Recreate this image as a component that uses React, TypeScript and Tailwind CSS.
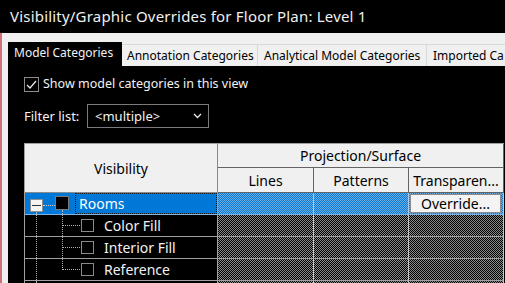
import React from "react";

const checker =
  "bg-[image:repeating-conic-gradient(#8a8a8a_0_25%,#000_0_50%)] bg-[length:2px_2px]";
const blueChecker =
  "bg-[image:repeating-conic-gradient(#6aaee8_0_25%,#0a78d4_0_50%)] bg-[length:2px_2px]";

function ChildRow({ label, last }: { label: string; last?: boolean }) {
  return (
    <>
      <div className="relative bg-black border-r border-b border-[#a0a0a0] flex items-center pl-[56px] gap-[10px]">
        <div className="absolute left-[11px] top-0 bottom-0 border-l border-dotted border-[#b0b0b0]" />
        <div
          className={
            "absolute left-[37px] top-0 border-l border-dotted border-[#b0b0b0] " +
            (last ? "h-[11px]" : "bottom-0")
          }
        />
        <div className="absolute left-[38px] top-[10px] w-[17px] border-t border-dotted border-[#b0b0b0]" />
        <div className="w-[13px] h-[13px] border border-[#8a8a8a] bg-black shrink-0" />
        <span className="text-[14px] text-[#f2f2f2] leading-none">{label}</span>
      </div>
      <div className={checker + " border-r border-b border-r-[#c8c8c8] border-b-[#a0a0a0]"} />
      <div className={checker + " border-r border-b border-r-[#c8c8c8] border-b-[#a0a0a0]"} />
      <div className={checker + " border-r border-b border-r-[#c8c8c8] border-b-[#a0a0a0]"} />
    </>
  );
}

export default function App() {
  return (
    <div className="w-[505px] h-[283px] overflow-hidden flex flex-col bg-[#f0f0f0] font-['Noto_Sans',sans-serif]">
      <div className="h-[33px] shrink-0 bg-black text-[#f0f0f0] text-[15px] flex items-center pl-[10px] tracking-[0.2px]">
        Visibility/Graphic Overrides for Floor Plan: Level 1
      </div>
      <div className="flex-1 min-h-0 flex flex-col border-l-2 border-[#d27079] pl-[6px] pt-[9px]">
        <div className="h-[24px] shrink-0 flex items-end text-[12px]">
          <div className="h-[24px] w-[114px] bg-black text-[#f2f2f2] flex items-center pl-[6px] pb-[2px]">
            Model Categories
          </div>
          <div className="h-[22px] w-[136px] border-t border-r border-[#d9d9d9] flex items-center pl-[5px] text-black">
            Annotation Categories
          </div>
          <div className="h-[22px] w-[169px] border-t border-r border-[#d9d9d9] flex items-center pl-[6px] text-black">
            Analytical Model Categories
          </div>
          <div className="h-[22px] flex-1 border-t border-[#d9d9d9] flex items-center pl-[6px] text-black whitespace-nowrap overflow-hidden">
            Imported Ca
          </div>
        </div>
        <div className="flex-1 min-h-0 bg-black pl-[16px] overflow-hidden">
          <div className="mt-[11px] flex items-center gap-[4px] h-[15px]">
            <div className="w-[15px] h-[15px] border border-[#8c8c8c] flex items-center justify-center">
              <svg width="13" height="13" viewBox="0 0 13 13">
                <polyline points="2,7 5,10 11,3" fill="none" stroke="#e8e8e8" strokeWidth="1.3" />
              </svg>
            </div>
            <span className="text-[12.5px] text-[#f2f2f2] leading-none">Show model categories in this view</span>
          </div>
          <div className="mt-[12px] flex items-center h-[24px]">
            <span className="w-[63px] text-[13px] text-[#f2f2f2] leading-none">Filter list:</span>
            <div className="w-[122px] h-[24px] border border-[#7a7a7a] flex items-center justify-between pl-[7px] pr-[6px]">
              <span className="text-[13px] text-[#f2f2f2] leading-none">&lt;multiple&gt;</span>
              <svg width="9" height="6" viewBox="0 0 9 6">
                <polyline points="1,1 4.5,4.5 8,1" fill="none" stroke="#e8e8e8" strokeWidth="1.3" />
              </svg>
            </div>
          </div>
          <div className="mt-[15px] w-[480px] grid grid-cols-[193px_96px_95px_95px] grid-rows-[24px_25px_22px_22px_22px_22px_22px] border-l border-t border-[#a0a0a0]">
            <div className="row-span-2 bg-[#f0f0f0] border-r border-b border-[#8a8a8a] flex items-center justify-center text-[14px] text-black">
              Visibility
            </div>
            <div className="col-span-3 bg-[#f0f0f0] border-r border-b border-[#646464] flex items-center justify-center text-[14px] text-black">
              Projection/Surface
            </div>
            <div className="bg-[#f0f0f0] border-r border-b border-[#646464] flex items-center justify-center text-[14px] text-black">
              Lines
            </div>
            <div className="bg-[#f0f0f0] border-r border-b border-[#646464] flex items-center justify-center text-[14px] text-black">
              Patterns
            </div>
            <div className="bg-[#f0f0f0] border-r border-b border-[#646464] flex items-center justify-center text-[14px] text-black whitespace-nowrap overflow-hidden">
              Transparen...
            </div>

            <div className="relative bg-[#0078d7] border-r border-b border-r-[#a0a0a0] border-b-[#7fb4e4] flex items-center pl-[54px]">
              <div className="absolute left-[5px] top-[6px] w-[13px] h-[13px] bg-[#f4f4f4] border border-[#8e8e8e] flex items-center justify-center">
                <div className="w-[9px] h-[1px] bg-[#333]" />
              </div>
              <div className="absolute left-[11px] top-[19px] bottom-0 border-l border-dotted border-[#b0b0b0]" />
              <div className="absolute left-[18px] top-[12px] w-[12px] border-t border-dotted border-[#d0d0d0]" />
              <div className="absolute left-[30px] top-[3px] w-[14px] h-[14px] bg-black border border-[#7a7a7a]" />
              <div className="absolute left-[37px] top-[17px] bottom-0 border-l border-dotted border-[#b0b0b0]" />
              <div className="absolute left-[50px] top-0 bottom-0 right-0 border border-dotted border-[#1a1a1a]" />
              <span className="text-[14px] text-white leading-none">Rooms</span>
            </div>
            <div className={blueChecker + " border-r border-b border-r-[#a8cdee] border-b-[#7fb4e4]"} />
            <div className={blueChecker + " border-r border-b border-r-[#a8cdee] border-b-[#7fb4e4]"} />
            <div className={blueChecker + " border-r border-b border-r-[#a8cdee] border-b-[#7fb4e4] pl-px pt-px"}>
              <div className="w-[91px] h-[19px] bg-[#f3f3f3] border border-[#8a8a8a] flex items-center justify-center text-[14px] text-black leading-none">
                Override...
              </div>
            </div>

            <ChildRow label="Color Fill" />
            <ChildRow label="Interior Fill" />
            <ChildRow label="Reference" last />

            <div className="relative bg-black border-r border-[#a0a0a0]">
              <div className="absolute left-[11px] top-0 bottom-0 border-l border-dotted border-[#b0b0b0]" />
            </div>
            <div className={checker + " border-r border-[#c8c8c8]"} />
            <div className={checker + " border-r border-[#c8c8c8]"} />
            <div className={checker + " border-r border-[#c8c8c8]"} />
          </div>
        </div>
      </div>
    </div>
  );
}
